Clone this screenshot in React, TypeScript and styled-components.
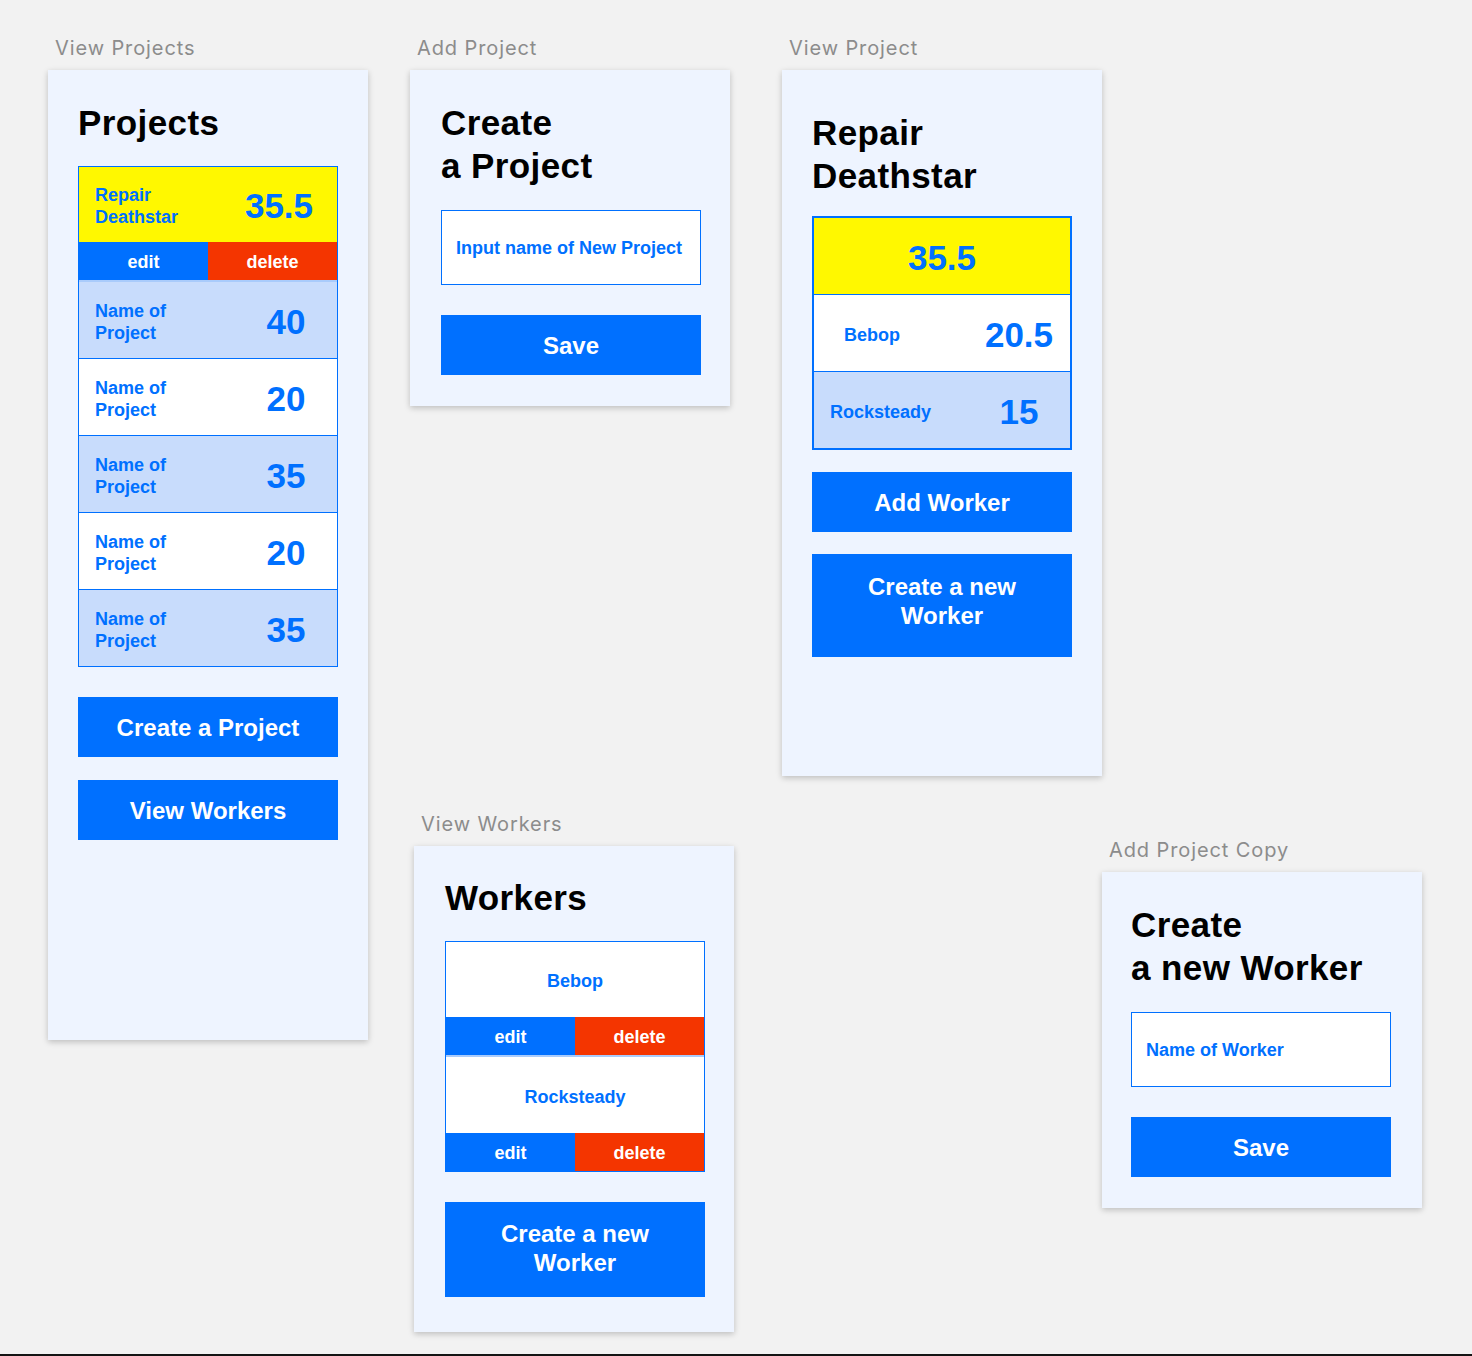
import styled, { createGlobalStyle } from 'styled-components';

const BLUE = '#0070ff';
const RED = '#f43500';
const YELLOW = '#fff800';
const PALE = '#c8dcfc';

const GlobalStyle = createGlobalStyle`
  html, body {
    margin: 0;
    padding: 0;
    background: #f2f2f2;
  }
  * {
    box-sizing: border-box;
  }
`;

const Canvas = styled.div`
  position: relative;
  width: 1472px;
  height: 1356px;
  background: #f2f2f2;
  border-bottom: 2px solid #141414;
  overflow: hidden;
  font-family: 'Liberation Sans', Arial, sans-serif;
`;

// artboards sit on a free design canvas, so their place is the content
const Frame = styled.section<{ $x: number; $y: number }>`
  position: absolute;
  left: ${(p) => p.$x}px;
  top: ${(p) => p.$y}px;
  width: 320px;
`;

const FrameLabel = styled.div`
  height: 24px;
  margin-bottom: 10px;
  padding-left: 7px;
  font-family: Inter, 'Open Sans', sans-serif;
  font-size: 20px;
  line-height: 24px;
  letter-spacing: 0.9px;
  color: #8c8c8c;
`;

const Board = styled.div<{ $h: number; $top: number; $left?: number }>`
  display: flex;
  flex-direction: column;
  width: 320px;
  height: ${(p) => p.$h}px;
  padding: ${(p) => p.$top}px 0 0 ${(p) => p.$left ?? 30}px;
  background: #eef4ff;
  box-shadow: 0 2px 6px rgba(0, 0, 0, 0.22);
`;

const Title = styled.h1<{ $gap?: number }>`
  margin: 0 0 ${(p) => p.$gap ?? 20}px 0;
  font-size: 35px;
  line-height: 43px;
  font-weight: 700;
  letter-spacing: 0.4px;
  color: #000;
`;

const ListBox = styled.div<{ $border?: number }>`
  display: flex;
  flex-direction: column;
  width: 260px;
  border: ${(p) => p.$border ?? 1}px solid ${BLUE};
  background: #fff;
`;

const Row = styled.div<{ $tone: string; $h?: number; $line?: string }>`
  display: flex;
  align-items: center;
  justify-content: space-between;
  height: ${(p) => p.$h ?? 77}px;
  padding-top: 3px;
  background: ${(p) => p.$tone};
  border-top: 1px solid ${(p) => p.$line ?? BLUE};
  &:first-child {
    border-top: none;
  }
`;

const CenterRow = styled(Row)`
  justify-content: center;
`;

const RowName = styled.span<{ $pad?: number }>`
  padding-left: ${(p) => p.$pad ?? 16}px;
  font-size: 18px;
  line-height: 22px;
  font-weight: 700;
  color: ${BLUE};
`;

const RowValue = styled.span<{ $right?: number }>`
  width: 80px;
  margin-right: ${(p) => p.$right ?? 11}px;
  text-align: center;
  font-size: 35px;
  font-weight: 700;
  color: ${BLUE};
`;

const ActionRow = styled.div`
  display: flex;
  height: 40px;
  border-bottom: 2px solid #a9cbfb;
  &:last-child {
    height: 38px;
    border-bottom: none;
  }
`;

const Action = styled.span<{ $danger?: boolean }>`
  flex: 1;
  display: flex;
  align-items: center;
  justify-content: center;
  padding-top: 3px;
  background: ${(p) => (p.$danger ? RED : BLUE)};
  color: #fff;
  font-size: 18px;
  font-weight: 700;
`;

const Field = styled.input`
  width: 260px;
  height: 75px;
  padding: 2px 0 0 14px;
  border: 1px solid ${BLUE};
  background: #fff;
  font-family: 'Liberation Sans', Arial, sans-serif;
  font-size: 18px;
  font-weight: 700;
  color: ${BLUE};
  outline: none;
  &::placeholder {
    color: ${BLUE};
    opacity: 1;
  }
`;

const Button = styled.button<{ $h?: number; $top?: number; $lift?: number }>`
  width: 260px;
  height: ${(p) => p.$h ?? 60}px;
  margin-top: ${(p) => p.$top ?? 30}px;
  padding: 0 20px ${(p) => p.$lift ?? 0}px;
  border: none;
  background: ${BLUE};
  color: #fff;
  font-family: 'Liberation Sans', Arial, sans-serif;
  font-size: 24px;
  line-height: 29px;
  font-weight: 700;
`;

const projects = [
  { value: '40', tone: PALE },
  { value: '20', tone: '#fff' },
  { value: '35', tone: PALE },
  { value: '20', tone: '#fff' },
  { value: '35', tone: PALE },
];

const Actions = () => (
  <ActionRow>
    <Action>edit</Action>
    <Action $danger>delete</Action>
  </ActionRow>
);

const ViewProjects = () => (
  <Frame $x={48} $y={36}>
    <FrameLabel>View Projects</FrameLabel>
    <Board $h={970} $top={31}>
      <Title $gap={22}>Projects</Title>
      <ListBox>
        <Row $tone={YELLOW} $h={75}>
          <RowName>
            Repair
            <br />
            Deathstar
          </RowName>
          <RowValue $right={18}>35.5</RowValue>
        </Row>
        <Actions />
        {projects.map((p, i) => (
          <Row key={i} $tone={p.tone} $h={i === 0 ? 76 : 77} $line={i === 0 ? 'transparent' : BLUE}>
            <RowName>
              Name of
              <br />
              Project
            </RowName>
            <RowValue>{p.value}</RowValue>
          </Row>
        ))}
      </ListBox>
      <Button>Create a Project</Button>
      <Button $top={23}>View Workers</Button>
    </Board>
  </Frame>
);

const AddProject = () => (
  <Frame $x={410} $y={36}>
    <FrameLabel>Add Project</FrameLabel>
    <Board $h={336} $top={31} $left={31}>
      <Title $gap={23}>
        Create
        <br />a Project
      </Title>
      <Field placeholder="Input name of New Project" />
      <Button>Save</Button>
    </Board>
  </Frame>
);

const ViewProject = () => (
  <Frame $x={782} $y={36}>
    <FrameLabel>View Project</FrameLabel>
    <Board $h={706} $top={41}>
      <Title $gap={19}>
        Repair
        <br />
        Deathstar
      </Title>
      <ListBox $border={2}>
        <CenterRow $tone={YELLOW} $h={76}>
          <RowValue $right={0}>35.5</RowValue>
        </CenterRow>
        <Row $tone="#fff">
          <RowName $pad={30}>Bebop</RowName>
          <RowValue>20.5</RowValue>
        </Row>
        <Row $tone={PALE}>
          <RowName>Rocksteady</RowName>
          <RowValue>15</RowValue>
        </Row>
      </ListBox>
      <Button $top={22}>Add Worker</Button>
      <Button $top={22} $h={103} $lift={10}>
        Create a new
        <br />
        Worker
      </Button>
    </Board>
  </Frame>
);

const ViewWorkers = () => (
  <Frame $x={414} $y={812}>
    <FrameLabel>View Workers</FrameLabel>
    <Board $h={486} $top={30} $left={31}>
      <Title $gap={22}>Workers</Title>
      <ListBox>
        <CenterRow $tone="#fff" $h={75}>
          <RowName $pad={0}>Bebop</RowName>
        </CenterRow>
        <Actions />
        <CenterRow $tone="#fff" $h={76} $line="transparent">
          <RowName $pad={0}>Rocksteady</RowName>
        </CenterRow>
        <Actions />
      </ListBox>
      <Button $h={95} $lift={3}>
        Create a new
        <br />
        Worker
      </Button>
    </Board>
  </Frame>
);

const AddWorker = () => (
  <Frame $x={1102} $y={838}>
    <FrameLabel>Add Project Copy</FrameLabel>
    <Board $h={336} $top={31} $left={29}>
      <Title $gap={23}>
        Create
        <br />a new Worker
      </Title>
      <Field placeholder="Name of Worker" />
      <Button>Save</Button>
    </Board>
  </Frame>
);

export default function App() {
  return (
    <>
      <GlobalStyle />
      <Canvas>
        <ViewProjects />
        <AddProject />
        <ViewProject />
        <ViewWorkers />
        <AddWorker />
      </Canvas>
    </>
  );
}
